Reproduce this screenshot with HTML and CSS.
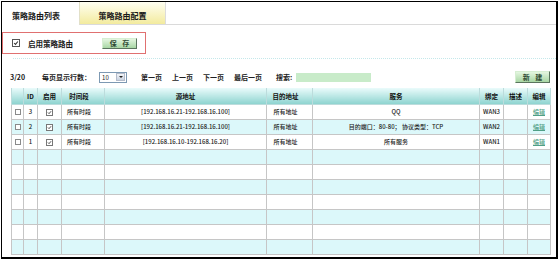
FILE: index.html
```html
<!DOCTYPE html>
<html lang="zh-CN">
    <head>
        <meta charset="UTF-8" />
        <meta name="viewport" content="width=device-width, initial-scale=1.0" />
        <title>策略路由列表</title>
        <link rel="stylesheet" href="styles.css">
    </head>
    <body>
        <div class="frame">
            <div class="tabs">
                <div class="tab active">策略路由列表</div>
                <div class="tab">策略路由配置</div>
                <div class="tab-fill"></div>
            </div>

            <div class="enable-box">
                <span class="cb cb-big">
                    <svg viewBox="0 0 8 8"><path d="M1.5 4 L3.3 5.8 L6.5 2" /></svg>
                </span>
                <span class="enable-label">启用策略路由</span>
                <button class="btn btn-save" type="button">保 存</button>
            </div>

            <div class="sep"></div>

            <div class="toolbar">
                <span class="count">3/20</span>
                <span class="per-page">每页显示行数：</span>
                <span class="select">
                    <span class="select-val">10</span>
                    <span class="select-arrow"></span>
                </span>
                <span class="pager">
                    <a>第一页</a>
                    <a>上一页</a>
                    <a>下一页</a>
                    <a>最后一页</a>
                </span>
                <span class="search-label">搜索:</span>
                <span class="search"></span>
                <button class="btn btn-new" type="button">新 建</button>
            </div>

            <table class="list">
                <colgroup>
                    <col style="width: 12px">
                    <col style="width: 14px">
                    <col style="width: 24px">
                    <col style="width: 43px">
                    <col style="width: 162px">
                    <col style="width: 46px">
                    <col style="width: 167px">
                    <col style="width: 24px">
                    <col style="width: 24px">
                    <col style="width: 23px">
                </colgroup>
                <thead>
                    <tr>
                        <th></th>
                        <th>ID</th>
                        <th>启用</th>
                        <th class="shift">时间段</th>
                        <th>源地址</th>
                        <th class="shift">目的地址</th>
                        <th>服务</th>
                        <th>绑定</th>
                        <th>描述</th>
                        <th>编辑</th>
                    </tr>
                </thead>
                <tbody>
                    <tr>
                        <td><span class="cb"></span></td>
                        <td>3</td>
                        <td><span class="cb cb-on"><svg viewBox="0 0 8 8"><path d="M1.5 4 L3.3 5.8 L6.5 2" /></svg></span></td>
                        <td class="shift">所有时段</td>
                        <td>[192.168.16.21-192.168.16.100]</td>
                        <td class="shift">所有地址</td>
                        <td>QQ</td>
                        <td>WAN3</td>
                        <td></td>
                        <td><a class="edit">编辑</a></td>
                    </tr>
                    <tr>
                        <td><span class="cb"></span></td>
                        <td>2</td>
                        <td><span class="cb cb-on"><svg viewBox="0 0 8 8"><path d="M1.5 4 L3.3 5.8 L6.5 2" /></svg></span></td>
                        <td class="shift">所有时段</td>
                        <td>[192.168.16.21-192.168.16.100]</td>
                        <td class="shift">所有地址</td>
                        <td>目的端口：80-80； 协议类型：TCP</td>
                        <td>WAN2</td>
                        <td></td>
                        <td><a class="edit">编辑</a></td>
                    </tr>
                    <tr>
                        <td><span class="cb"></span></td>
                        <td>1</td>
                        <td><span class="cb cb-on"><svg viewBox="0 0 8 8"><path d="M1.5 4 L3.3 5.8 L6.5 2" /></svg></span></td>
                        <td class="shift">所有时段</td>
                        <td>[192.168.16.10-192.168.16.20]</td>
                        <td class="shift">所有地址</td>
                        <td>所有服务</td>
                        <td>WAN1</td>
                        <td></td>
                        <td><a class="edit">编辑</a></td>
                    </tr>
                    <tr><td></td><td></td><td></td><td></td><td></td><td></td><td></td><td></td><td></td><td></td></tr>
                    <tr><td></td><td></td><td></td><td></td><td></td><td></td><td></td><td></td><td></td><td></td></tr>
                    <tr><td></td><td></td><td></td><td></td><td></td><td></td><td></td><td></td><td></td><td></td></tr>
                    <tr><td></td><td></td><td></td><td></td><td></td><td></td><td></td><td></td><td></td><td></td></tr>
                    <tr><td></td><td></td><td></td><td></td><td></td><td></td><td></td><td></td><td></td><td></td></tr>
                    <tr><td></td><td></td><td></td><td></td><td></td><td></td><td></td><td></td><td></td><td></td></tr>
                    <tr><td></td><td></td><td></td><td></td><td></td><td></td><td></td><td></td><td></td><td></td></tr>
                </tbody>
            </table>
        </div>
    </body>
</html>
```

FILE: styles.css
```css
* {
    box-sizing: border-box;
}
body {
    margin: 0;
    background: #fff;
    font-family: "Noto Sans CJK SC", sans-serif;
    color: #1a1a1a;
}
.frame {
    margin: 1px 0 0 1px;
    width: 557px;
    height: 258px;
    border: solid #000;
    border-width: 1px 2px 2px 1px;
}

/* tabs */
.tabs {
    display: flex;
    height: 23px;
}
.tab {
    width: 87px;
    height: 23px;
    padding-top: 10px;
    border-bottom: 1px solid #dadada;
    border-left: 1px solid #e2e0c8;
    border-right: 1px solid #dcdcdc;
    background: linear-gradient(#fffff2, #f3eb9e);
    font-size: 8px;
    line-height: 8px;
    font-weight: bold;
    text-align: center;
}
.tab.active {
    width: 77px;
    padding-left: 10px;
    border: none;
    background: #fff;
    text-align: left;
}
.tab-fill {
    flex: 1;
    border-bottom: 1px solid #dadada;
}

/* enable box */
.enable-box {
    display: flex;
    align-items: center;
    width: 144px;
    height: 22px;
    margin-top: 7px;
    padding-left: 9px;
    border: 1px solid #e07070;
}
.cb {
    display: inline-block;
    width: 6px;
    height: 6px;
    border: 1px solid #8a8a8a;
    background: #fff;
    vertical-align: middle;
}
.cb svg {
    display: block;
    width: 100%;
    height: 100%;
}
.cb path {
    fill: none;
    stroke: #333;
    stroke-width: 1.4;
}
.cb-big {
    width: 8px;
    height: 8px;
    border-color: #555;
}
.cb-on {
    width: 7px;
    height: 7px;
    border-color: #777;
}
.enable-label {
    margin-left: 8px;
    font-size: 7.5px;
    font-weight: bold;
}
.btn {
    width: 35px;
    height: 11px;
    padding: 0;
    border: 1px solid;
    border-color: #d6eed2 #5a745e #5a745e #d6eed2;
    background: linear-gradient(#e4f6e0, #a8d6a4);
    font-family: "Noto Sans CJK SC", sans-serif;
    font-size: 7px;
    line-height: 9px;
    font-weight: bold;
    letter-spacing: 2px;
    text-indent: 2px;
    color: #2f4a34;
}
.btn-save {
    margin-left: 29px;
}

.sep {
    width: 543px;
    margin: 4px 0 0 11px;
    border-top: 1px dotted #c4e8ea;
}

/* toolbar */
.toolbar {
    display: flex;
    align-items: center;
    height: 12px;
    margin-top: 12px;
    padding: 0 6px 0 8px;
    font-size: 7px;
    font-weight: bold;
}
.per-page {
    margin-left: 17px;
}
.select {
    display: flex;
    align-items: center;
    width: 28px;
    height: 11px;
    margin-left: 8px;
    padding: 0 1px 0 2px;
    border: 1px solid #7d99b3;
    background: #fff;
}
.select-val {
    font-size: 6px;
    font-weight: normal;
}
.select-arrow {
    position: relative;
    width: 9px;
    height: 8px;
    margin-left: auto;
    border: 1px solid #b4bccb;
    background: linear-gradient(#f4f6fa, #c9d2e0);
}
.select-arrow::after {
    content: "";
    position: absolute;
    left: 2px;
    top: 2px;
    border-style: solid;
    border-width: 2px 2px 0 2px;
    border-color: #222 transparent transparent transparent;
}
.pager {
    display: flex;
    gap: 10px;
    margin-left: 14px;
}
.search-label {
    margin-left: 14px;
}
.search {
    width: 75px;
    height: 9px;
    margin-left: 4px;
    background: #c8ebc9;
}
.btn-new {
    margin-left: auto;
    height: 12px;
}

/* list */
.list {
    width: 539px;
    margin: 5px 0 0 9px;
    border-collapse: collapse;
    table-layout: fixed;
}
.list th {
    height: 16px;
    padding: 0;
    border: 1px solid #bcdcdc;
    border-top: none;
    background: linear-gradient(#eafbfb, #8ed4d0);
    font-size: 6.5px;
    font-weight: bold;
    color: #111;
    text-align: center;
}
.list tbody tr {
    height: 15px;
}
.list td {
    padding: 0;
    border: 1px solid #c6c6c6;
    font-size: 6px;
    font-weight: 500;
    color: #222;
    text-align: center;
    white-space: nowrap;
    overflow: hidden;
}
.list tbody tr:nth-child(even) {
    background: #dcf8fa;
}
.list .shift {
    padding-right: 8px;
}
.edit {
    color: #4f9f86;
    text-decoration: underline;
}
```
